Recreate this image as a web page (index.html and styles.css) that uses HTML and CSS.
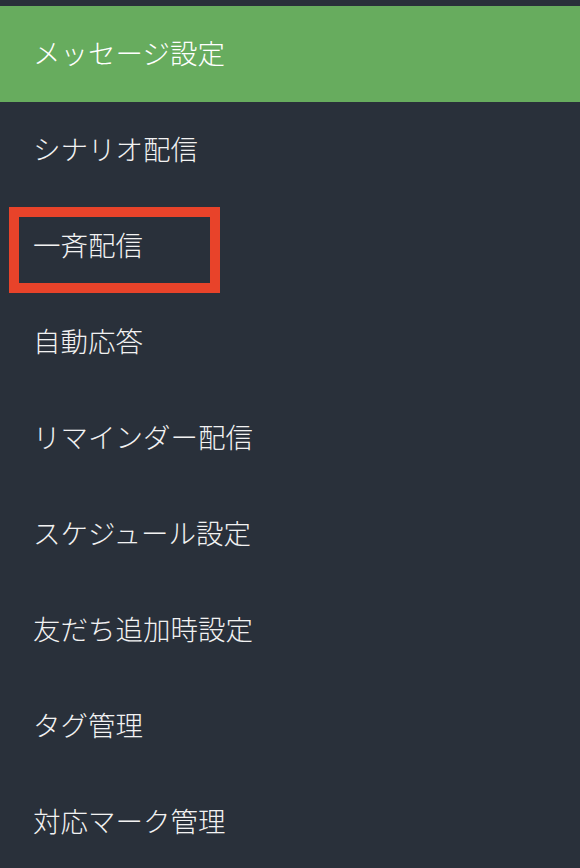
FILE: index.html
```html
<!DOCTYPE html>
<html lang="ja">
<head>
<meta charset="utf-8">
<link rel="stylesheet" href="styles.css">
</head>
<body>
<nav class="menu">
  <div class="item active">メッセージ設定</div>
  <div class="item">シナリオ配信</div>
  <div class="item highlighted"><span class="mark"></span>一斉配信</div>
  <div class="item">自動応答</div>
  <div class="item">リマインダー配信</div>
  <div class="item">スケジュール設定</div>
  <div class="item">友だち追加時設定</div>
  <div class="item">タグ管理</div>
  <div class="item">対応マーク管理</div>
</nav>
</body>
</html>
```
FILE: styles.css
```css
html, body {
  margin: 0;
  padding: 0;
  background: #29303a;
}
body {
  font-family: "Noto Sans CJK JP", "Noto Sans", sans-serif;
  color: #f2f2f2;
  padding-top: 6px;
}
.menu {
  display: flex;
  flex-direction: column;
}
.item {
  position: relative;
  height: 96px;
  display: flex;
  align-items: center;
  padding-left: 33px;
  padding-bottom: 3px;
  font-size: 27.5px;
  font-weight: 300;
  line-height: 1;
  box-sizing: border-box;
}
.item.active {
  background: #67ac5e;
  color: #ffffff;
}
.mark {
  position: absolute;
  left: 9px;
  top: 9px;
  width: 211px;
  height: 86px;
  box-sizing: border-box;
  border: 10px solid #e8432a;
}
```
